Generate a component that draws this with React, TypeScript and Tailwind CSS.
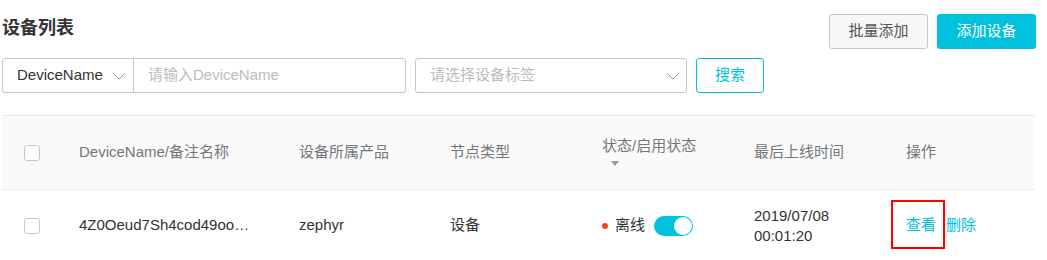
import React from "react";

const font = { fontFamily: '"Liberation Sans", "Noto Sans CJK SC", sans-serif' };

function Chevron() {
  return (
    <svg width="14" height="8" viewBox="0 0 14 8" className="shrink-0">
      <polyline points="1,1 7,7 13,1" fill="none" stroke="#9a9a9a" strokeWidth="1" />
    </svg>
  );
}

function Checkbox() {
  return <div className="w-4 h-4 rounded-[3px] border border-[#c4c6cf] bg-white" />;
}

export default function App() {
  return (
    <div style={font} className="w-[1047px] h-[260px] overflow-hidden bg-white">
      <div className="ml-[2px] w-[1034px] pt-[14px]">
        <div className="flex items-start justify-between">
          <div className="text-[18px] leading-[26px] font-bold text-[#333] mt-[1px]">设备列表</div>
          <div className="flex gap-[9px]">
            <button className="h-[35px] w-[99px] rounded-[3px] border border-[#c4c6cf] bg-[#f7f7f7] text-[15px] text-[#555]">
              批量添加
            </button>
            <button className="h-[35px] w-[99px] rounded-[3px] bg-[#00c1de] text-[15px] text-white">
              添加设备
            </button>
          </div>
        </div>

        <div className="flex items-center mt-[9px] h-[35px]">
          <div className="flex h-[35px] w-[404px] rounded-[3px] border border-[#c4c6cf]">
            <div className="flex w-[131px] items-center justify-between pl-[14px] pr-[7px] border-r border-[#c4c6cf]">
              <span className="text-[15px] text-[#333]">DeviceName</span>
              <Chevron />
            </div>
            <div className="flex items-center pl-[14px] text-[15px] text-[#bcbcbc]">请输入DeviceName</div>
          </div>
          <div className="ml-[9px] flex h-[35px] w-[272px] items-center justify-between rounded-[3px] border border-[#c4c6cf] pl-[14px] pr-[6px]">
            <span className="text-[15px] text-[#bcbcbc]">请选择设备标签</span>
            <Chevron />
          </div>
          <button className="ml-[9px] h-[35px] w-[68px] rounded-[3px] border border-[#00c1de] bg-white text-[15px] text-[#00c1de]">
            搜索
          </button>
        </div>

        <table className="mt-[22px] w-[1033px] table-fixed border-collapse">
          <colgroup>
            <col className="w-[57px]" />
            <col className="w-[220px]" />
            <col className="w-[151px]" />
            <col className="w-[152px]" />
            <col className="w-[152px]" />
            <col className="w-[152px]" />
            <col className="w-[149px]" />
          </colgroup>
          <thead>
            <tr className="h-[74px] bg-[#fafafa] border-t border-b border-[#ebebeb] text-left text-[15px] text-[#73777a]">
              <th className="pl-[22px] font-normal">
                <Checkbox />
              </th>
              <th className="pl-5 font-normal">DeviceName/备注名称</th>
              <th className="pl-5 font-normal">设备所属产品</th>
              <th className="pl-5 font-normal">节点类型</th>
              <th className="pl-5 font-normal">
                <div className="leading-[20px] -mt-[4px]">状态/启用状态</div>
                <svg width="8" height="5" viewBox="0 0 8 5" className="ml-[9px] mt-[5px]">
                  <polygon points="0,0 8,0 4,5" fill="#9a9a9a" />
                </svg>
              </th>
              <th className="pl-5 font-normal">最后上线时间</th>
              <th className="pl-5 font-normal">操作</th>
            </tr>
          </thead>
          <tbody>
            <tr className="h-[72px] border-b border-[#ebebeb] text-left text-[15px] text-[#333]">
              <td className="pl-[22px]">
                <Checkbox />
              </td>
              <td className="pl-5 whitespace-nowrap">4Z0Oeud7Sh4cod49oo…</td>
              <td className="pl-5">zephyr</td>
              <td className="pl-5">设备</td>
              <td className="pl-5">
                <div className="flex items-center">
                  <span className="w-[6px] h-[6px] rounded-full bg-[#f5451d]" />
                  <span className="ml-[7px]">离线</span>
                  <span className="ml-[9px] relative w-[39px] h-[20px] rounded-full bg-[#00c1de]">
                    <span className="absolute right-[1px] top-[1px] w-[18px] h-[18px] rounded-full bg-white" />
                  </span>
                </div>
              </td>
              <td className="pl-5 leading-[20px]">
                <div>2019/07/08</div>
                <div>00:01:20</div>
              </td>
              <td className="pl-5">
                <div className="flex items-center">
                  <span className="relative text-[#00c1de]">
                    查看
                    <span className="absolute -left-[15px] -right-[9px] -top-[14px] -bottom-[12px] border-2 border-[#ff0000]" />
                  </span>
                  <span className="ml-[10px] text-[#00c1de]">删除</span>
                </div>
              </td>
            </tr>
          </tbody>
        </table>
      </div>
    </div>
  );
}
